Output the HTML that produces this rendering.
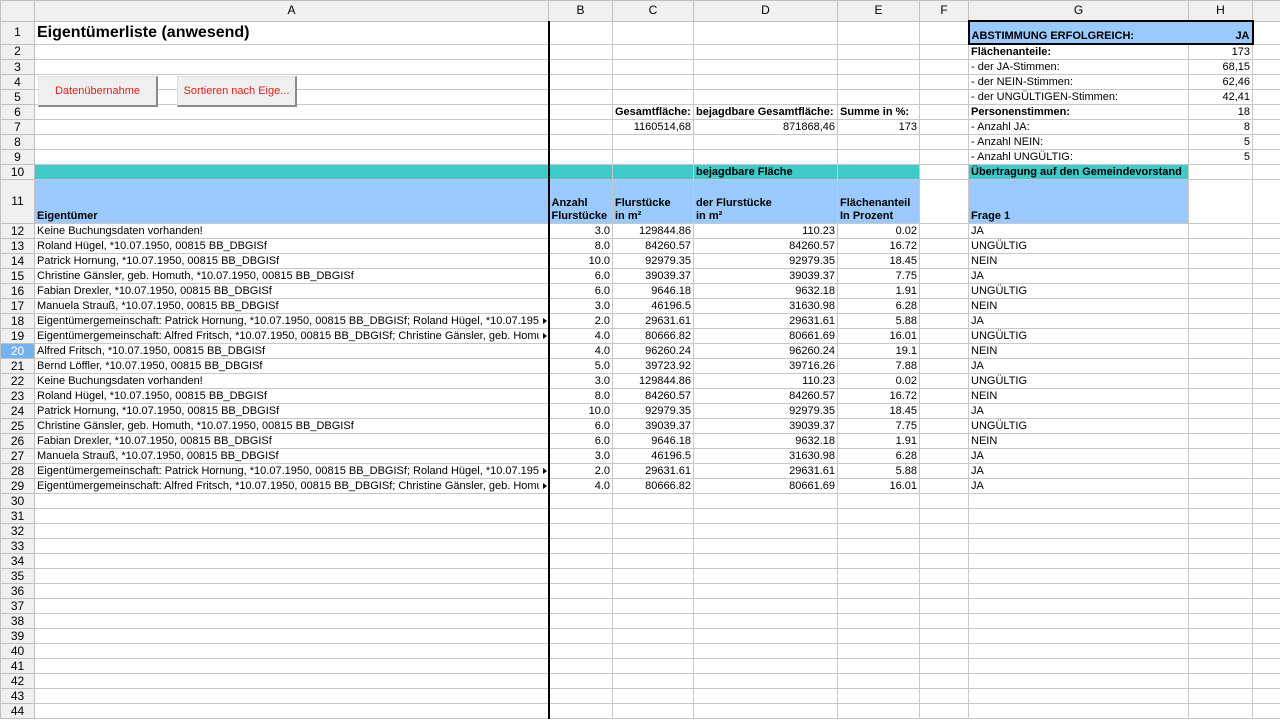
<!DOCTYPE html>
<html><head><meta charset="utf-8"><style>
body{margin:0;width:1280px;height:720px;overflow:hidden;background:#fff;font-family:"Liberation Sans",Arial,sans-serif;}
table{border-collapse:collapse;table-layout:fixed;width:1280px;font-size:11px;color:#000;}
td{border:1px solid #c8c8c8;padding:0 2px;white-space:nowrap;overflow:hidden;vertical-align:bottom;line-height:13px;height:14px;}
tr.ch td{background:#f0f0f0;text-align:center;font-size:12px;vertical-align:middle;height:19px;border-color:#c0c0c0}
td.rh{background:#f0f0f0;text-align:center;font-size:12px;padding:0;border-color:#c0c0c0;vertical-align:middle}
td.sel{background:#72b2ef;color:#fff}
td.b{border-left:2px solid #000}
.r{text-align:right}
.bo{font-weight:bold}
.t{background:#3fc9c9}
.bl{background:#99c9fd}
td.a{position:relative}
td.a div{width:502px;overflow:hidden;white-space:nowrap}
td.a i{position:absolute;right:1px;bottom:4px;width:0;height:0;border-left:4px solid #000;border-top:3px solid transparent;border-bottom:3px solid transparent}
.btn{position:absolute;height:31px;width:120px;background:#f0eff0;border:1px solid #e0e0e0;border-right:2px solid #8a8a8a;border-bottom:2px solid #8a8a8a;color:#e0201c;font-size:11px;text-align:center;line-height:29px;box-sizing:border-box;font-family:"Liberation Sans",Arial,sans-serif}
.hd{border:2px solid #000 !important}
</style></head><body>
<table>
<colgroup><col style="width:34px"><col style="width:514px"><col style="width:64px"><col style="width:81px"><col style="width:144px"><col style="width:82px"><col style="width:49px"><col style="width:220px"><col style="width:64px"><col style="width:28px"></colgroup>
<tr class="ch"><td></td><td>A</td><td>B</td><td>C</td><td>D</td><td>E</td><td>F</td><td>G</td><td>H</td><td></td></tr>
<tr style="height:23px"><td class="rh">1</td><td class="bo" style="font-size:16px;line-height:19px;vertical-align:middle">Eigentümerliste (anwesend)</td><td class="b"></td><td></td><td></td><td></td><td></td><td class="bl bo hd" style="border-right:none !important">ABSTIMMUNG ERFOLGREICH:</td><td class="bl bo r hd" style="border-left:none !important">JA</td><td></td></tr>
<tr><td class="rh">2</td><td></td><td class="b"></td><td></td><td></td><td></td><td></td><td class="bo">Flächenanteile:</td><td class="r">173</td><td></td></tr>
<tr><td class="rh">3</td><td></td><td class="b"></td><td></td><td></td><td></td><td></td><td>- der JA-Stimmen:</td><td class="r">68,15</td><td></td></tr>
<tr><td class="rh">4</td><td></td><td class="b"></td><td></td><td></td><td></td><td></td><td>- der NEIN-Stimmen:</td><td class="r">62,46</td><td></td></tr>
<tr><td class="rh">5</td><td></td><td class="b"></td><td></td><td></td><td></td><td></td><td>- der UNGÜLTIGEN-Stimmen:</td><td class="r">42,41</td><td></td></tr>
<tr><td class="rh">6</td><td></td><td class="b"></td><td class="bo">Gesamtfläche:</td><td class="bo">bejagdbare Gesamtfläche:</td><td class="bo">Summe in %:</td><td></td><td class="bo">Personenstimmen:</td><td class="r">18</td><td></td></tr>
<tr><td class="rh">7</td><td></td><td class="b"></td><td class="r">1160514,68</td><td class="r">871868,46</td><td class="r">173</td><td></td><td>- Anzahl JA:</td><td class="r">8</td><td></td></tr>
<tr><td class="rh">8</td><td></td><td class="b"></td><td></td><td></td><td></td><td></td><td>- Anzahl NEIN:</td><td class="r">5</td><td></td></tr>
<tr><td class="rh">9</td><td></td><td class="b"></td><td></td><td></td><td></td><td></td><td>- Anzahl UNGÜLTIG:</td><td class="r">5</td><td></td></tr>
<tr><td class="rh">10</td><td class="t"></td><td class="t b"></td><td class="t"></td><td class="t bo">bejagdbare Fläche</td><td class="t"></td><td></td><td class="t bo">Übertragung auf den Gemeindevorstand</td><td></td><td></td></tr>
<tr style="height:44px"><td class="rh">11</td><td class="bl bo">Eigentümer</td><td class="bl bo b">Anzahl<br>Flurstücke</td><td class="bl bo">Flurstücke<br>in m²</td><td class="bl bo">der Flurstücke<br>in m²</td><td class="bl bo">Flächenanteil<br>In Prozent</td><td></td><td class="bl bo">Frage 1</td><td></td><td></td></tr>
<tr><td class="rh">12</td><td>Keine Buchungsdaten vorhanden!</td><td class="r b">3.0</td><td class="r">129844.86</td><td class="r">110.23</td><td class="r">0.02</td><td></td><td>JA</td><td></td><td></td></tr>
<tr><td class="rh">13</td><td>Roland Hügel, *10.07.1950, 00815 BB_DBGISf</td><td class="r b">8.0</td><td class="r">84260.57</td><td class="r">84260.57</td><td class="r">16.72</td><td></td><td>UNGÜLTIG</td><td></td><td></td></tr>
<tr><td class="rh">14</td><td>Patrick Hornung, *10.07.1950, 00815 BB_DBGISf</td><td class="r b">10.0</td><td class="r">92979.35</td><td class="r">92979.35</td><td class="r">18.45</td><td></td><td>NEIN</td><td></td><td></td></tr>
<tr><td class="rh">15</td><td>Christine Gänsler, geb. Homuth, *10.07.1950, 00815 BB_DBGISf</td><td class="r b">6.0</td><td class="r">39039.37</td><td class="r">39039.37</td><td class="r">7.75</td><td></td><td>JA</td><td></td><td></td></tr>
<tr><td class="rh">16</td><td>Fabian Drexler, *10.07.1950, 00815 BB_DBGISf</td><td class="r b">6.0</td><td class="r">9646.18</td><td class="r">9632.18</td><td class="r">1.91</td><td></td><td>UNGÜLTIG</td><td></td><td></td></tr>
<tr><td class="rh">17</td><td>Manuela Strauß, *10.07.1950, 00815 BB_DBGISf</td><td class="r b">3.0</td><td class="r">46196.5</td><td class="r">31630.98</td><td class="r">6.28</td><td></td><td>NEIN</td><td></td><td></td></tr>
<tr><td class="rh">18</td><td class="a"><div>Eigentümergemeinschaft: Patrick Hornung, *10.07.1950, 00815 BB_DBGISf; Roland Hügel, *10.07.1950, 00815 BB_DBGISf</div><i></i></td><td class="r b">2.0</td><td class="r">29631.61</td><td class="r">29631.61</td><td class="r">5.88</td><td></td><td>JA</td><td></td><td></td></tr>
<tr><td class="rh">19</td><td class="a"><div>Eigentümergemeinschaft: Alfred Fritsch, *10.07.1950, 00815 BB_DBGISf; Christine Gänsler, geb. Homuth, *10.07.1950</div><i></i></td><td class="r b">4.0</td><td class="r">80666.82</td><td class="r">80661.69</td><td class="r">16.01</td><td></td><td>UNGÜLTIG</td><td></td><td></td></tr>
<tr><td class="rh sel">20</td><td>Alfred Fritsch, *10.07.1950, 00815 BB_DBGISf</td><td class="r b">4.0</td><td class="r">96260.24</td><td class="r">96260.24</td><td class="r">19.1</td><td></td><td>NEIN</td><td></td><td></td></tr>
<tr><td class="rh">21</td><td>Bernd Löffler, *10.07.1950, 00815 BB_DBGISf</td><td class="r b">5.0</td><td class="r">39723.92</td><td class="r">39716.26</td><td class="r">7.88</td><td></td><td>JA</td><td></td><td></td></tr>
<tr><td class="rh">22</td><td>Keine Buchungsdaten vorhanden!</td><td class="r b">3.0</td><td class="r">129844.86</td><td class="r">110.23</td><td class="r">0.02</td><td></td><td>UNGÜLTIG</td><td></td><td></td></tr>
<tr><td class="rh">23</td><td>Roland Hügel, *10.07.1950, 00815 BB_DBGISf</td><td class="r b">8.0</td><td class="r">84260.57</td><td class="r">84260.57</td><td class="r">16.72</td><td></td><td>NEIN</td><td></td><td></td></tr>
<tr><td class="rh">24</td><td>Patrick Hornung, *10.07.1950, 00815 BB_DBGISf</td><td class="r b">10.0</td><td class="r">92979.35</td><td class="r">92979.35</td><td class="r">18.45</td><td></td><td>JA</td><td></td><td></td></tr>
<tr><td class="rh">25</td><td>Christine Gänsler, geb. Homuth, *10.07.1950, 00815 BB_DBGISf</td><td class="r b">6.0</td><td class="r">39039.37</td><td class="r">39039.37</td><td class="r">7.75</td><td></td><td>UNGÜLTIG</td><td></td><td></td></tr>
<tr><td class="rh">26</td><td>Fabian Drexler, *10.07.1950, 00815 BB_DBGISf</td><td class="r b">6.0</td><td class="r">9646.18</td><td class="r">9632.18</td><td class="r">1.91</td><td></td><td>NEIN</td><td></td><td></td></tr>
<tr><td class="rh">27</td><td>Manuela Strauß, *10.07.1950, 00815 BB_DBGISf</td><td class="r b">3.0</td><td class="r">46196.5</td><td class="r">31630.98</td><td class="r">6.28</td><td></td><td>JA</td><td></td><td></td></tr>
<tr><td class="rh">28</td><td class="a"><div>Eigentümergemeinschaft: Patrick Hornung, *10.07.1950, 00815 BB_DBGISf; Roland Hügel, *10.07.1950, 00815 BB_DBGISf</div><i></i></td><td class="r b">2.0</td><td class="r">29631.61</td><td class="r">29631.61</td><td class="r">5.88</td><td></td><td>JA</td><td></td><td></td></tr>
<tr><td class="rh">29</td><td class="a"><div>Eigentümergemeinschaft: Alfred Fritsch, *10.07.1950, 00815 BB_DBGISf; Christine Gänsler, geb. Homuth, *10.07.1950</div><i></i></td><td class="r b">4.0</td><td class="r">80666.82</td><td class="r">80661.69</td><td class="r">16.01</td><td></td><td>JA</td><td></td><td></td></tr>
<tr><td class="rh">30</td><td></td><td class="b"></td><td></td><td></td><td></td><td></td><td></td><td></td><td></td></tr>
<tr><td class="rh">31</td><td></td><td class="b"></td><td></td><td></td><td></td><td></td><td></td><td></td><td></td></tr>
<tr><td class="rh">32</td><td></td><td class="b"></td><td></td><td></td><td></td><td></td><td></td><td></td><td></td></tr>
<tr><td class="rh">33</td><td></td><td class="b"></td><td></td><td></td><td></td><td></td><td></td><td></td><td></td></tr>
<tr><td class="rh">34</td><td></td><td class="b"></td><td></td><td></td><td></td><td></td><td></td><td></td><td></td></tr>
<tr><td class="rh">35</td><td></td><td class="b"></td><td></td><td></td><td></td><td></td><td></td><td></td><td></td></tr>
<tr><td class="rh">36</td><td></td><td class="b"></td><td></td><td></td><td></td><td></td><td></td><td></td><td></td></tr>
<tr><td class="rh">37</td><td></td><td class="b"></td><td></td><td></td><td></td><td></td><td></td><td></td><td></td></tr>
<tr><td class="rh">38</td><td></td><td class="b"></td><td></td><td></td><td></td><td></td><td></td><td></td><td></td></tr>
<tr><td class="rh">39</td><td></td><td class="b"></td><td></td><td></td><td></td><td></td><td></td><td></td><td></td></tr>
<tr><td class="rh">40</td><td></td><td class="b"></td><td></td><td></td><td></td><td></td><td></td><td></td><td></td></tr>
<tr><td class="rh">41</td><td></td><td class="b"></td><td></td><td></td><td></td><td></td><td></td><td></td><td></td></tr>
<tr><td class="rh">42</td><td></td><td class="b"></td><td></td><td></td><td></td><td></td><td></td><td></td><td></td></tr>
<tr><td class="rh">43</td><td></td><td class="b"></td><td></td><td></td><td></td><td></td><td></td><td></td><td></td></tr>
<tr><td class="rh">44</td><td></td><td class="b"></td><td></td><td></td><td></td><td></td><td></td><td></td><td></td></tr>
</table>
<div class="btn" style="left:38px;top:76px">Datenübernahme</div>
<div class="btn" style="left:177px;top:76px">Sortieren nach Eige...</div>
</body></html>
